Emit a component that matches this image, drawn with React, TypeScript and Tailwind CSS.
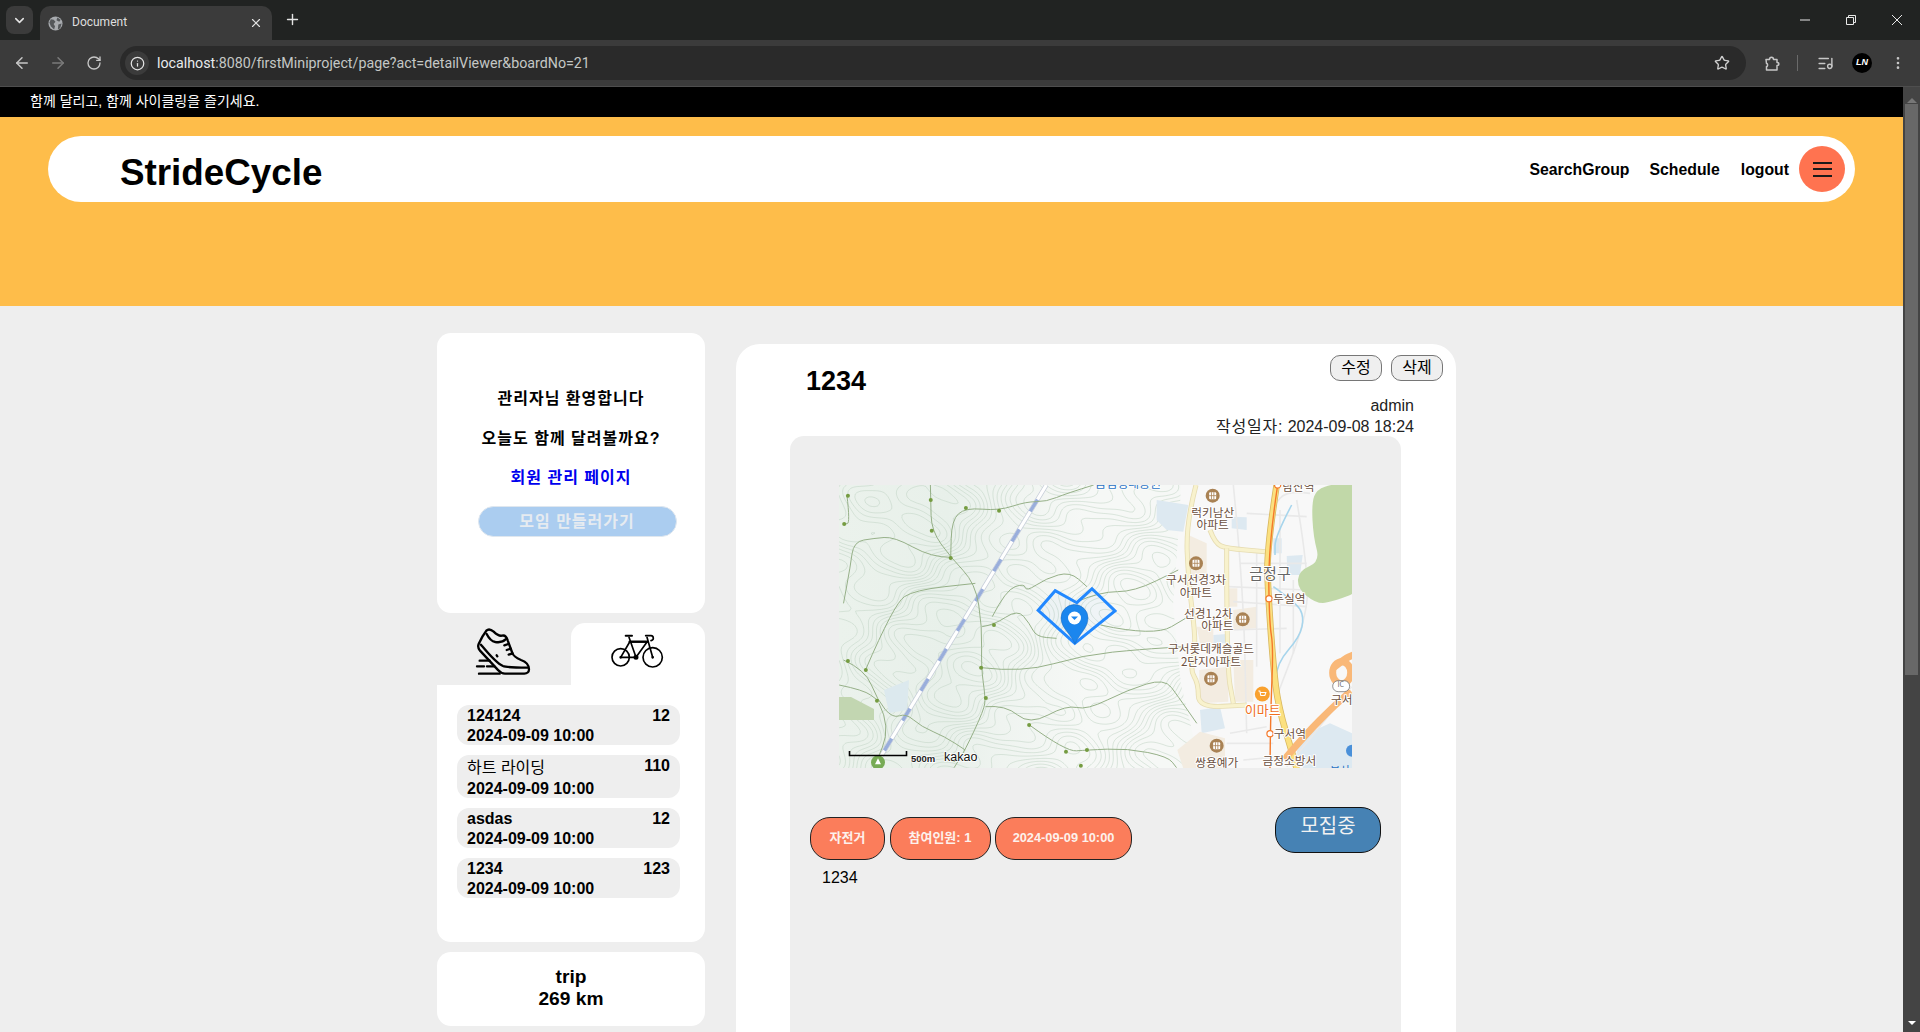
import { useMemo } from "react";
import { ArrowLeft, ArrowRight, ChevronDown, Info, ListMusic, MoreVertical, Plus, RotateCw, Star, X } from "lucide-react";

type P = [number, number];
const z5 = (p: P): P => [p[0] / 2.958 - 9, p[1] / 3 - 15];
const z8 = (p: P): P => [261 + p[0] / 3, -5 + p[1] / 3];

function smooth(pts: P[], closed = false) {
  if (pts.length < 3) return "M" + pts.map((p) => p.join(" ")).join("L");
  if (closed) {
    const n = pts.length;
    const mid = (a: P, b: P): P => [(a[0] + b[0]) / 2, (a[1] + b[1]) / 2];
    const s = mid(pts[n - 1], pts[0]);
    let d = `M${s[0]} ${s[1]}`;
    for (let i = 0; i < n; i++) {
      const m = mid(pts[i], pts[(i + 1) % n]);
      d += `Q${pts[i][0]} ${pts[i][1]} ${m[0]} ${m[1]}`;
    }
    return d + "Z";
  }
  let d = `M${pts[0][0]} ${pts[0][1]}`;
  for (let i = 1; i < pts.length - 1; i++) {
    const mx = (pts[i][0] + pts[i + 1][0]) / 2;
    const my = (pts[i][1] + pts[i + 1][1]) / 2;
    d += `Q${pts[i][0]} ${pts[i][1]} ${mx} ${my}`;
  }
  const l = pts[pts.length - 1];
  return d + `L${l[0]} ${l[1]}`;
}
const poly = (pts: P[]) => pts.map((p) => p.map((v) => v.toFixed(1)).join(",")).join(" ");

function height(x: number, y: number) {
  return (
    Math.sin(x / 47 + y / 83) * 2.6 +
    Math.cos(y / 41 - x / 97) * 2.2 +
    Math.sin((x + y) / 19) * 0.7 +
    Math.cos((x - 2 * y) / 15) * 0.5 +
    Math.sin(x / 8 + 1.2) * Math.cos(y / 9) * 0.22
  );
}

function contours() {
  const step = 3;
  const out: string[] = [];
  for (let lv = -7; lv <= 7; lv += 0.5) {
    let d = "";
    for (let x = 0; x < 360; x += step) {
      for (let y = 0; y < 283; y += step) {
        const c = [height(x, y), height(x + step, y), height(x + step, y + step), height(x, y + step)];
        const pts: P[] = [];
        const edges: [number, number, P, P][] = [
          [c[0], c[1], [x, y], [x + step, y]],
          [c[1], c[2], [x + step, y], [x + step, y + step]],
          [c[3], c[2], [x, y + step], [x + step, y + step]],
          [c[0], c[3], [x, y], [x, y + step]],
        ];
        for (const [a, b, p, q] of edges) {
          if (a < lv !== b < lv) {
            const t = (lv - a) / (b - a);
            pts.push([p[0] + (q[0] - p[0]) * t, p[1] + (q[1] - p[1]) * t]);
          }
        }
        if (pts.length >= 2) d += `M${pts[0][0].toFixed(1)} ${pts[0][1].toFixed(1)}L${pts[1][0].toFixed(1)} ${pts[1][1].toFixed(1)}`;
      }
    }
    out.push(d);
  }
  return out;
}

const trails: P[][] = [
  [[780,45],[700,70],[640,95],[580,95],[500,122],[400,113],[360,150],[357,262]],
  [[297,45],[298,90],[300,182],[357,262],[430,340],[450,470],[447,593],[460,684],[455,720],[400,840],[367,893]],
  [[357,262],[300,262],[190,200],[130,205],[70,215],[60,290],[40,400]],
  [[450,470],[485,465],[555,418],[590,460],[610,500],[670,505]],
  [[447,593],[570,608],[750,555],[920,538],[1050,530]],
  [[460,710],[520,705],[590,765],[700,705],[760,720],[880,660],[990,625],[1030,680],[1085,760]],
  [[590,765],[698,845],[760,840],[880,835],[1000,860],[1025,893]],
  [[800,465],[960,500],[1060,440]],
  [[730,395],[800,365],[900,365],[1030,300]],
  [[480,440],[520,360],[575,340],[580,365],[640,325],[710,305],[760,350]],
  [[40,570],[105,600],[140,690],[185,745],[225,730],[270,770],[340,800],[400,840]],
  [[105,600],[190,400],[250,360],[430,340]],
  [[27,645],[100,660],[140,690]],
  [[145,700],[180,770],[130,893]],
  [[50,75],[60,160],[42,162]],
];
const trailDots: P[] = [[53,77],[42,162],[298,90],[301,182],[357,264],[402,114],[500,122],[485,465],[447,593],[461,684],[589,765],[698,845],[760,840],[367,870],[742,887],[53,573],[106,600],[139,692]];

const buildings: P[][] = [
  [[265,165],[320,190],[320,300],[280,300],[265,260]],
  [[290,440],[340,440],[340,490],[300,490]],
  [[380,325],[412,325],[412,380],[380,380]],
  [[400,390],[470,380],[470,445],[400,450]],
  [[298,570],[385,560],[385,665],[298,670]],
  [[400,540],[460,540],[460,665],[405,665]],
  [[232,810],[300,755],[375,775],[375,865],[250,865]],
];
const water: P[][] = [
  [[170,60],[265,75],[250,155],[200,150],[170,120]],
  [[395,110],[440,112],[440,150],[395,145]],
  [[560,228],[608,225],[600,285],[562,285]],
  [[300,690],[360,680],[375,745],[305,760]],
  [[520,175],[545,175],[545,220],[520,220]],
  [[600,770],[690,730],[756,760],[756,865],[610,865],[590,820]],
  [[340,465],[380,462],[380,490],[340,490]],
];
const halls: P[] = [[338,47],[288,250],[428,418],[333,596],[350,797]];
const labels: [string, number, number, number?, string?][] = [
  ["럭키남산", 338, 97], ["아파트", 338, 133],
  ["구서선경3차", 288, 300], ["아파트", 288, 338],
  ["선경1,2차", 325, 400], ["아파트", 352, 436],
  ["구서롯데캐슬골드", 333, 506], ["2단지아파트", 333, 546],
  ["쌍용예가", 350, 847], ["금정소방서", 568, 843],
  ["두실역", 568, 355], ["구서역", 570, 761], ["구서", 725, 660], ["남산역", 595, 20],
  ["금정구", 510, 280, 15, "#666666"], ["이마트", 488, 690, 13, "#f0701e"],
];

function KakaoMap() {
  const lines = useMemo(contours, []);
  return (
    <svg width="513" height="283" viewBox="0 0 513 283" className="block" fontFamily="'Noto Sans CJK KR', sans-serif">
      <defs>
        <linearGradient id="terrain" x1="0" x2="1" y1="0" y2="0">
          <stop offset="0" stopColor="#ebf2ec" />
          <stop offset="0.3" stopColor="#e8f0ea" />
          <stop offset="0.45" stopColor="#eff4f0" />
          <stop offset="0.68" stopColor="#f6f8f6" />
        </linearGradient>
        <clipPath id="hills">
          <polygon points="0,0 342,0 340,40 334,120 342,200 362,283 0,283" />
        </clipPath>
      </defs>
      <rect width="513" height="283" fill="#f8f8f8" />
      <polygon points="0,0 342,0 340,40 334,120 342,200 362,283 0,283" fill="url(#terrain)" />
      <g clipPath="url(#hills)" fill="none" stroke="#c3d5c7" strokeWidth="0.55">
        {lines.map((d, i) => <path key={i} d={d} />)}
      </g>
      <polygon points={poly([[0,212],[12,212],[35,224],[35,235],[0,235]])} fill="#c2d6b1" />
      <polygon points={poly([[45,205],[70,195],[68,225],[50,228]])} fill="#dce9ee" />
      {water.map((w, i) => <polygon key={i} points={poly(w.map(z8))} fill="#dde9f1" />)}
      {buildings.map((b, i) => <polygon key={i} points={poly(b.map(z8))} fill="#f3ece1" />)}
      <g fill="none" stroke="#e9e9e9" strokeWidth="1.6">
        {[[[400,15],[430,320],[440,760]],[[470,220],[470,560]],[[420,250],[620,250]],[[385,320],[620,330]],[[400,365],[620,380]],[[395,450],[560,445]],[[390,760],[500,740]],[[380,790],[520,790]],[[430,840],[540,830]],[[590,60],[630,300],[610,440],[530,650]],[[630,40],[560,30],[520,80]],[[755,620],[620,790],[560,860]],[[440,100],[620,110]],[[540,90],[540,520]],[[580,300],[580,520]]].map((l, i) => (
          <path key={i} d={smooth((l as P[]).map(z8))} />
        ))}
      </g>
      <path d={smooth(([[575,75],[525,170],[525,225]] as P[]).map(z8))} fill="none" stroke="#a7d5ec" strokeWidth="1.6" />
      <path d={smooth(([[520,320],[590,370],[612,410],[600,470],[530,550],[525,640]] as P[]).map(z8))} fill="none" stroke="#a7d5ec" strokeWidth="1.6" />
      <g fill="none" strokeLinejoin="round">
        {[[[288,15],[258,130],[265,300],[290,500],[270,570],[295,610],[295,683],[440,675]],[[330,150],[345,190],[380,205],[495,215]],[[380,205],[380,560],[400,670]]].map((l, i) => (
          <g key={i}>
            <path d={smooth((l as P[]).map(z8))} stroke="#e6dcb2" strokeWidth="5" />
            <path d={smooth((l as P[]).map(z8))} stroke="#f8f2cd" strokeWidth="3.4" />
          </g>
        ))}
      </g>
      <path d={smooth(([[530,15],[500,210],[505,350],[520,560],[535,680],[580,830],[590,865]] as P[]).map(z8))} fill="none" stroke="#d8b75e" strokeWidth="6.6" />
      <path d={smooth(([[530,15],[500,210],[505,350],[520,560],[535,680],[580,830],[590,865]] as P[]).map(z8))} fill="none" stroke="#fbe07f" strokeWidth="5" />
      <path d={smooth(([[533,15],[505,200],[508,430],[520,500],[512,690],[510,865]] as P[]).map(z8))} fill="none" stroke="#f5792a" strokeWidth="1.4" />
      <g fill="none" stroke="#f9b878" strokeWidth="7" strokeLinecap="round">
        <path d={smooth(([[560,830],[620,760],[700,680],[745,640]] as P[]).map(z8))} />
        <ellipse cx={261 + 725 / 3} cy={-5 + 578 / 3} rx="9" ry="11" />
        <path d={smooth(([[705,560],[735,535],[760,525]] as P[]).map(z8))} />
      </g>
      <circle cx={513} cy={z8([756, 812])[1]} r="6" fill="#4a90d9" />
      <rect x={261 + 698 / 3} y={-5 + 602 / 3} width="17" height="11" rx="5.5" fill="#fff" stroke="#777" strokeWidth="0.8" />
      <text x={261 + 722 / 3} y={-5 + 622 / 3} textAnchor="middle" fontSize="7" fill="#666">IC</text>
      <path d={smooth(([[635,70],[650,28],[700,12],[770,5],[790,150],[790,330],[700,365],[650,372],[592,325],[596,272],[660,245],[640,170]] as P[]).map(z8), true)} fill="#c1d8a8" />
      <path d={smooth(([[640,45],[130,893]] as P[]).map(z5))} fill="none" stroke="#c5ccd8" strokeWidth="4.6" />
      <path d={smooth(([[640,45],[130,893]] as P[]).map(z5))} fill="none" stroke="#ffffff" strokeWidth="3.2" />
      <path d={smooth(([[640,45],[130,893]] as P[]).map(z5))} fill="none" stroke="#99aedb" strokeWidth="3.4" strokeDasharray="14 21" strokeDashoffset="-17" />
      <g fill="none" stroke="#96b088" strokeWidth="1" strokeLinejoin="round">
        {trails.map((t, i) => <path key={i} d={smooth(t.map(z5))} />)}
      </g>
      {trailDots.map(z5).map((p, i) => <circle key={i} cx={p[0]} cy={p[1]} r="2" fill="#759c41" />)}
      {halls.map(z8).map((p, i) => (
        <g key={i}>
          <circle cx={p[0]} cy={p[1]} r="7" fill="#a98254" />
          <rect x={p[0] - 3.5} y={p[1] - 3.5} width="7" height="7" rx="1" fill="#ffffff" />
          <path d={`M${p[0] - 1.2} ${p[1] - 3.5}v7M${p[0] + 1.2} ${p[1] - 3.5}v7M${p[0] - 3.5} ${p[1]}h7`} stroke="#a98254" strokeWidth="0.8" />
        </g>
      ))}
      <circle cx={z8([487, 642])[0]} cy={z8([487, 642])[1]} r="7.5" fill="#f9a12e" />
      <path d={`M${z8([487, 642])[0] - 4} ${z8([487, 642])[1] - 3}h1.5l1 4.5h4l1-3h-5.5`} fill="none" stroke="#fff" strokeWidth="1.1" />
      {([[533,15],[507,356],[510,761]] as P[]).map(z8).map((p, i) => <circle key={i} cx={p[0]} cy={p[1]} r="3.1" fill="#fff" stroke="#f5792a" strokeWidth="1.2" />)}
      {labels.map(([t, x, y, size, color], i) => {
        const p = z8([x, y]);
        return (
          <text key={i} x={p[0]} y={p[1] + (size ?? 11.7) * 0.38} textAnchor="middle" fontSize={size ?? 11.7} fill={color ?? "#6b5040"} stroke="#ffffff" strokeWidth="2" paintOrder="stroke" strokeLinejoin="round">{t}</text>
        );
      })}
      <text x="289" y="3" textAnchor="middle" fontSize="12" fill="#2a72c4" stroke="#fff" strokeWidth="1.5" paintOrder="stroke">금샘생태공원</text>
      <text x="501" y="290" textAnchor="middle" fontSize="11" fill="#2a72c4">부산</text>
      <circle cx={z5([142, 877])[0]} cy={z5([142, 877])[1]} r="7" fill="#77ab55" />
      <path d={`M${z5([142, 877])[0]} ${z5([142, 877])[1] - 4}l3 6h-6z`} fill="#fff" />
      <path d="M10.5 266v4.5h57V266" fill="none" stroke="#000" strokeWidth="1.6" />
      <text x="72" y="277" fontSize="9.5" fontWeight="700" fontFamily="'Liberation Sans', sans-serif" fill="#222" stroke="#fff" strokeWidth="1.5" paintOrder="stroke">500m</text>
      <text x="105" y="276" fontSize="12.5" fontFamily="'Liberation Sans', sans-serif" fill="#111" stroke="#fff" strokeWidth="1.5" paintOrder="stroke">kakao</text>
      <polygon points={poly(([[616,421],[666,362],[730,398],[775,356],[843,423],[724,520]] as P[]).map(z5))} fill="#2288ff" fillOpacity="0.03" stroke="#2288ff" strokeWidth="3" strokeLinejoin="miter" />
      <path d="M236 159C232 149 222 143 222 133a13.500 13.500 0 0 1 27 0C249 143 240 149 236 159Z" fill="#1b86ee" stroke="#1762b5" strokeWidth="0.5" />
      <circle cx="235.500" cy="133" r="6.500" fill="#ffffff" />
      <path d="M232 131.500h7l-3.500 3.500z" fill="#1b86ee" />
    </svg>
  );
}

function Shoe() {
  return (
    <svg width="70" height="60" viewBox="0 0 210 180" fill="none" stroke="#000" strokeWidth="7" strokeLinecap="round" strokeLinejoin="round">
      <path d="M29 66C36 50 44 36 52 26c6-6 14-4 22 3 8 8 16 14 25 12 8-2 14 4 17 14l14 38c3 9 12 15 26 21 14 5 24 15 24 28 0 8-6 13-14 13h-58c-8 0-14-3-20-10L33 86c-5-6-7-13-4-20Z" />
      <path d="M36 68c20 24 44 54 66 64 12 5 34 5 74 5" />
      <path d="M53 36c6 12 14 22 26 24 14 2 24 0 31-8" />
      <path d="M106 70l12-4M113 84l12-4M119 98l12-4" />
      <path d="M83 100l2 3" />
      <path d="M32 116h30M24 133h21M54 133h22M30 155h62" />
    </svg>
  );
}

function Bike() {
  return (
    <svg width="64" height="48" viewBox="0 0 192 144" fill="none" stroke="#000" strokeWidth="5" strokeLinecap="round" strokeLinejoin="round">
      <circle cx="47" cy="88" r="26" />
      <circle cx="143" cy="88" r="29" />
      <path d="M47 88h46L72 28M47 88l27-46h52L93 88M126 28l17 60" />
      <path d="M74 41h53" strokeWidth="7" />
      <path d="M62 23h19" strokeWidth="6" />
      <path d="M122 23h16c6 0 7 4 7 8s-1 6-7 7" />
      <circle cx="93" cy="88" r="5" fill="#000" />
      <circle cx="47" cy="88" r="1.500" fill="#000" />
      <circle cx="143" cy="88" r="1.500" fill="#000" />
    </svg>
  );
}

const boards: [string, string, string][] = [
  ["124124", "12", "h-[40px]"],
  ["하트 라이딩", "110", "h-[43px]"],
  ["asdas", "12", "h-[40px]"],
  ["1234", "123", "h-[40px]"],
];

export default function App() {
  return (
    <div className="flex h-[1032px] w-[1920px] flex-col overflow-hidden font-['Liberation_Sans','Noto_Sans_CJK_KR',sans-serif] text-black">
      <div className="flex h-[40px] shrink-0 items-end bg-[#212322] text-[#e3e3e3]">
        <div className="ml-[6px] mb-[6px] flex h-[28px] w-[27px] items-center justify-center rounded-[8px] bg-[#3b3b3b]">
          <ChevronDown size={15} strokeWidth={2.5} />
        </div>
        <div className="ml-[7px] flex h-[34px] w-[232px] items-center rounded-t-[10px] bg-[#3b3b3b] pl-[8px] pr-[9px]">
          <svg width="15" height="15" viewBox="0 0 16 16">
            <circle cx="8" cy="8" r="7.5" fill="#a8abaf" />
            <path d="M3 3.500l3 .5 2 2-2 2.500 1.500 2.500-1 3.500L3 11 1.500 7zM10 1.500l3.500 2.500-1.500 2-3-1.500zM11 9l3.500-1-1.500 5-2.500 1.500z" fill="#54575a" />
          </svg>
          <span className="ml-[9px] flex-1 pb-[2px] font-['Roboto',sans-serif] text-[12px] text-[#dfdfdf]">Document</span>
          <X size={14} strokeWidth={2} />
        </div>
        <Plus size={17} className="mb-[12px] ml-[12px]" />
        <div className="flex-1" />
        <div className="mb-[12px] flex items-center text-[#e8e8e8]">
          <svg width="46" height="16" viewBox="0 0 46 16"><path d="M18 8h10" stroke="currentColor" strokeWidth="1" /></svg>
          <svg width="46" height="16" viewBox="0 0 46 16" fill="none" stroke="currentColor"><path d="M18.500 5.500h7v7h-7zM20.500 5.500v-2h7v7h-2" /></svg>
          <svg width="46" height="16" viewBox="0 0 46 16" fill="none" stroke="currentColor"><path d="M18 3l10 10M28 3L18 13" /></svg>
        </div>
      </div>
      <div className="flex h-[47px] shrink-0 items-center border-b border-[#4e4e4e] bg-[#3b3b3b] text-[#c7c7c7]">
        <ArrowLeft size={18} className="ml-[13px]" />
        <ArrowRight size={18} className="ml-[18px] text-[#7b7b7b]" />
        <RotateCw size={16} className="ml-[19px]" />
        <div className="ml-[18px] flex h-[34px] w-[1626px] items-center rounded-full bg-[#2a2a2a] pl-[5px] pr-[16px]">
          <div className="flex h-[24px] w-[24px] items-center justify-center rounded-full bg-[#3b3b3b]">
            <Info size={15} className="text-[#e3e3e3]" />
          </div>
          <span className="ml-[8px] flex-1 pt-[1px] font-['Roboto',sans-serif] text-[14.25px] text-[#c4c7c5]">
            <span className="text-[#e8eaed]">localhost</span>:8080/firstMiniproject/page?act=detailViewer&amp;boardNo=21
          </span>
          <Star size={16} className="text-[#d0d0d0]" />
        </div>
        <svg width="17" height="17" viewBox="0 0 17 17" fill="none" stroke="currentColor" strokeWidth="1.500" strokeLinejoin="round" className="ml-[18px]">
          <path d="M2 4.500h3.500c0-3 4-3 4 0H13v3c2.500 0 2.500 3 0 3v4.500H2.500v-3.500c1.500 0 1.500-3 0-3z" />
        </svg>
        <div className="ml-[16px] h-[16px] w-px bg-[#6a6a6a]" />
        <ListMusic size={17} className="ml-[19px]" />
        <div className="ml-[18px] flex h-[20px] w-[20px] items-center justify-center rounded-full bg-black text-[9px] font-bold italic text-white">LN</div>
        <MoreVertical size={16} className="ml-[18px]" />
      </div>

      <div className="flex min-h-0 flex-1">
        <div className="min-w-0 flex-1 overflow-hidden bg-[#eeeeee]">
          <div className="flex h-[30px] items-center bg-black pb-[2px] pl-[30px] text-[14px] text-white">함께 달리고, 함께 사이클링을 즐기세요.</div>
          <header className="h-[189px] bg-[#febd4a] pl-[48px] pt-[19px]">
            <div className="flex h-[66px] w-[1807px] items-center rounded-full bg-white pl-[72px] pr-[10px]">
              <div className="flex-1 pt-[7px] text-[36.8px] font-bold">StrideCycle</div>
              <nav className="flex items-center text-[15.8px] font-bold">
                <span className="pt-[2px]">SearchGroup</span>
                <span className="ml-[20px] pt-[2px]">Schedule</span>
                <span className="ml-[21px] pt-[2px]">logout</span>
                <button className="ml-[10px] flex h-[46px] w-[46px] flex-col items-center justify-center gap-[4.5px] rounded-full bg-[#ff7350]">
                  <span className="h-[2px] w-[19px] bg-[#1a1a1a]" />
                  <span className="h-[2px] w-[19px] bg-[#1a1a1a]" />
                  <span className="h-[2px] w-[19px] bg-[#1a1a1a]" />
                </button>
              </nav>
            </div>
          </header>

          <main className="flex pl-[437px] pt-[27px]">
            <aside className="w-[268px] shrink-0">
              <section className="flex h-[280px] flex-col items-center rounded-[14px] bg-white pt-[55px] text-[16px] font-bold">
                <p className="h-[22px] leading-[22px] tracking-[1px]">관리자님 환영합니다</p>
                <p className="mt-[18px] h-[22px] leading-[22px] tracking-[1px]">오늘도 함께 달려볼까요?</p>
                <a className="mt-[17px] h-[22px] leading-[22px] tracking-[1px] text-[#0000ee]">회원 관리 페이지</a>
                <button className="ml-[12px] mt-[17px] h-[31px] w-[199px] rounded-full border border-[#dfe7ef] bg-[#abcdf0] text-[16px] font-bold tracking-[1px] text-[#e6ebf0]">모임 만들러가기</button>
              </section>
              <div className="mt-[10px] flex h-[62px]">
                <div className="flex w-[134px] items-center justify-center pb-[4px]"><Shoe /></div>
                <div className="flex w-[134px] items-center justify-center rounded-t-[14px] bg-white pb-[4px] pr-[2px]"><Bike /></div>
              </div>
              <section className="flex h-[257px] flex-col gap-[10px] rounded-b-[14px] bg-white pl-[20px] pr-[25px] pt-[20px]">
                {boards.map(([title, count, h]) => (
                  <div key={title} className={`${h} rounded-[12px] bg-[#eeeeee] px-[10px] pt-[1px] text-[16px] font-bold leading-[20px]`}>
                    <div className="flex items-start justify-between">
                      <span className={title === "하트 라이딩" ? "font-normal leading-[23px]" : ""}>{title}</span>
                      <span>{count}</span>
                    </div>
                    <div>2024-09-09 10:00</div>
                  </div>
                ))}
              </section>
              <section className="mt-[10px] flex h-[74px] flex-col items-center justify-center rounded-[14px] bg-white pb-[2px] text-[19.2px] font-bold leading-[22px]">
                <div>trip</div>
                <div>269 km</div>
              </section>
            </aside>

            <article className="ml-[31px] mt-[11px] h-[800px] w-[720px] shrink-0 rounded-t-[24px] bg-white pt-[11px]">
              <div className="flex h-[39px] items-start justify-between pl-[70px] pr-[13px]">
                <h1 className="mt-[11px] text-[27px] font-bold leading-[30px]">1234</h1>
                <div className="flex gap-[9px]">
                  <button className="h-[26px] w-[52px] rounded-[10px] border border-[#767676] bg-[#efefef] text-[16px]">수정</button>
                  <button className="h-[26px] w-[52px] rounded-[10px] border border-[#767676] bg-[#efefef] text-[16px]">삭제</button>
                </div>
              </div>
              <div className="pr-[42px] text-right text-[16px] text-[#222222]">
                <div className="h-[21px] pt-[1px] leading-[21px]">admin</div>
                <div className="h-[21px] pt-[1px] leading-[21px]"><span className="tracking-[0.8px]">작성일자:</span> 2024-09-08 18:24</div>
              </div>
              <div className="ml-[54px] h-[700px] w-[611px] rounded-t-[14px] bg-[#eeeeee] pt-[49px]">
                <div className="ml-[49px] w-[513px]"><KakaoMap /></div>
                <div className="mt-[39px] flex items-start justify-between pl-[20px] pr-[20px]">
                  <div className="mt-[10px] flex gap-[4.5px]">
                    <span className="flex h-[43px] w-[75px] items-center justify-center rounded-[20px] border border-[#222222] bg-[#fb7d5b] pb-[2px] text-[13px] font-bold text-[#fdf1ec]">자전거</span>
                    <span className="flex h-[43px] w-[101px] items-center justify-center rounded-[20px] border border-[#222222] bg-[#fb7d5b] pb-[2px] text-[13px] font-bold text-[#fdf1ec]">참여인원: 1</span>
                    <span className="flex h-[43px] w-[137px] items-center justify-center rounded-[20px] border border-[#222222] bg-[#fb7d5b] pb-[2px] text-[12.8px] font-bold text-[#fdf1ec]">2024-09-09 10:00</span>
                  </div>
                  <button className="h-[46px] w-[106px] rounded-[20px] border border-[#111111] bg-[#4682b4] pb-[8px] text-[20px] text-[#f2f2f2]">모집중</button>
                </div>
                <p className="ml-[32px] mt-[8px] text-[16px] leading-[20px]">1234</p>
              </div>
            </article>
          </main>
        </div>
        <div className="flex w-[17px] shrink-0 flex-col items-center bg-[#444444]">
          <div className="mt-[11px] h-0 w-0 border-x-[5px] border-b-[5px] border-x-transparent border-b-[#777777]" />
          <div className="mt-[1px] h-[571px] w-[13px] bg-[#686868]" />
          <div className="flex-1" />
          <div className="mb-[7px] h-0 w-0 border-x-[4px] border-t-[4px] border-x-transparent border-t-white" />
        </div>
      </div>
    </div>
  );
}
